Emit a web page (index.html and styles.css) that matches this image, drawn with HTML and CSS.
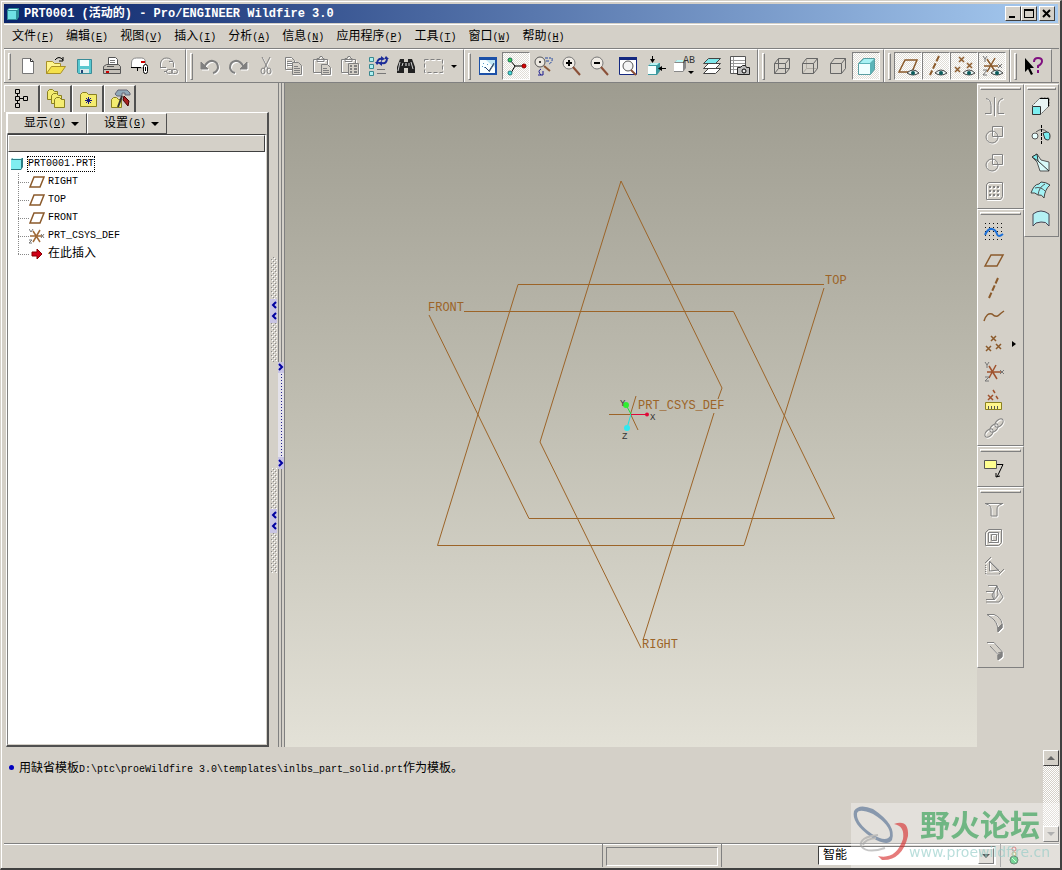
FILE: index.html
```
<!DOCTYPE html>
<html lang="zh-CN">
<head>
    <meta charset="utf-8">
    <title>PRT0001 (活动的) - Pro/ENGINEER Wildfire 3.0</title>
    <link rel="stylesheet" href="styles.css">
</head>
<body>
    <div class="window">
        <header class="titlebar">
            <svg class="app-icon" width="12" height="12" viewBox="0 0 12 12"><path d="M0 2l2-2h10v9l-2 3H0z" fill="#2f8f98"/><path d="M1 3h8v8H1z" fill="#6fe0e4"/><path d="M1 2l1-1h9l-1 1z" fill="#c8ffff"/></svg>
            <h1 class="title">PRT0001 (活动的) - Pro/ENGINEER Wildfire 3.0</h1>
            <button class="win-btn" aria-label="最小化"><svg width="12" height="11" viewBox="0 0 12 11"><path d="M2 8h6v2H2z"/></svg></button>
            <button class="win-btn" aria-label="最大化"><svg width="12" height="11" viewBox="0 0 12 11"><path d="M1 1h10v9H1zM2 3v6h8V3z" fill-rule="evenodd"/></svg></button>
            <button class="win-btn close" aria-label="关闭"><svg width="12" height="11" viewBox="0 0 12 11"><path d="M2 2l7 7M9 2l-7 7" stroke="#000" stroke-width="2"/></svg></button>
        </header>

        <nav class="menubar">
            <button>文件<span>(<u>F</u>)</span></button>
            <button>编辑<span>(<u>E</u>)</span></button>
            <button>视图<span>(<u>V</u>)</span></button>
            <button>插入<span>(<u>I</u>)</span></button>
            <button>分析<span>(<u>A</u>)</span></button>
            <button>信息<span>(<u>N</u>)</span></button>
            <button>应用程序<span>(<u>P</u>)</span></button>
            <button>工具<span>(<u>T</u>)</span></button>
            <button>窗口<span>(<u>W</u>)</span></button>
            <button>帮助<span>(<u>H</u>)</span></button>
        </nav>

        <div class="toolbars">
            <!-- file -->
            <div class="group">
                <button class="tool" aria-label="新建"><svg viewBox="0 0 22 22"><path d="M5.500 3.500h8l3 3v12h-11z" fill="#fff" stroke="#777"/><path d="M13.500 3.500v3h3" fill="none" stroke="#333"/></svg></button>
                <button class="tool" aria-label="打开"><svg viewBox="0 0 22 22"><path d="M1.500 18.500v-12h6l2 2h6v3" fill="#fff58c" stroke="#a89028"/><path d="M1.500 18.500l5-7h14l-5 7z" fill="#f5e14a" stroke="#a89028"/><path d="M10 5q4-5 8 0M18 2v4h-4" fill="none" stroke="#000"/></svg></button>
                <button class="tool" aria-label="保存"><svg viewBox="0 0 22 22"><path d="M4.500 4.500h14v14h-13l-1-1z" fill="#58c8d0" stroke="#3a8c98"/><path d="M7 5h9v6H7z" fill="#f4ffff"/><path d="M7 14h9v4H7z" fill="#d8e8e8"/><path d="M8 15h2v3H8z" fill="#247"/></svg></button>
                <button class="tool" aria-label="打印"><svg viewBox="0 0 22 22"><path d="M7.500 10V2.500h7l2 2V10" fill="#fff" stroke="#555"/><path d="M9 5.500h5M9 7.500h5" stroke="#777"/><path d="M2.500 11.500l3-2h12l2 2v7h-17z" fill="#c4c0b8" stroke="#555"/><path d="M3 14.500h16" stroke="#444"/><path d="M6 11.500h7" stroke="#555"/><path d="M5 17h3" stroke="#c00" stroke-width="2"/></svg></button>
                <button class="tool" aria-label="发送邮件"><svg viewBox="0 0 22 22"><path d="M2.500 12.500V8q0-5 5-5h5q4 0 4 5v5z" fill="#fff" stroke="#888"/><path d="M2 12.500h10M8.500 12v4" stroke="#000"/><path d="M12 7h4" stroke="#c00" stroke-width="2"/><rect x="14.500" y="9.500" width="4" height="9" rx="2" fill="#fff" stroke="#000"/><path d="M16.500 12v4" stroke="#000"/></svg></button>
                <button class="tool off" aria-label="发送链接"><svg viewBox="0 0 22 22"><path d="M3.500 12.500V8q1-5 6-5t7 5v4M3 12.500h6M12 6.500h4M7 16.500h3"/><rect x="9.500" y="14.500" width="6" height="4" rx="2"/><rect x="14.500" y="14.500" width="6" height="4" rx="2"/></svg></button>
            </div>

            <!-- edit -->
            <div class="group">
                <button class="tool off" aria-label="撤消"><svg viewBox="0 0 22 22"><path d="M5 12q4-7 9-6t5 7q-1 4-5 5" stroke-width="2"/><path d="M2 7v7h7z" fill="#808080"/></svg></button>
                <button class="tool off" aria-label="重做"><svg viewBox="0 0 22 22"><path d="M17 12q-4-7-9-6t-5 7q1 4 5 5" stroke-width="2"/><path d="M20 7v7h-7z" fill="#808080"/></svg></button>
                <button class="tool off" aria-label="剪切"><svg viewBox="0 0 22 22"><path d="M7 2l6 12M15 2L9 14"/><ellipse cx="8" cy="16" rx="2" ry="3"/><ellipse cx="14" cy="16" rx="2" ry="3"/></svg></button>
                <button class="tool off" aria-label="复制"><svg viewBox="0 0 22 22"><path d="M2.500 2.500h6l3 3v9h-9zM4 6.500h5M4 8.500h6M4 10.500h6"/><path d="M9.500 7.500h6l3 3v9h-9z" fill="#d4d0c8"/><path d="M11 11.500h4M11 13.500h6M11 15.500h6M11 17.500h6"/></svg></button>
                <button class="tool off" aria-label="粘贴"><svg viewBox="0 0 22 22"><path d="M2.500 4.500h14v13h-14zM6 6.500V3.500h2l1-2h2l1 2h1v3z"/><path d="M10.500 9.500h6l3 3v7h-9z" fill="#d4d0c8"/><path d="M12 13.500h4M12 15.500h6M12 17.500h6"/></svg></button>
                <button class="tool off" aria-label="选择性粘贴"><svg viewBox="0 0 22 22"><path d="M2.500 4.500h14v13h-14zM6 6.500V3.500h2l1-2h2l1 2h1v3z"/><path d="M9.500 8.500h10v11h-10z" fill="#d4d0c8"/><path d="M11 11h2M15 11h3M11 14h2M15 14h3M11 17h2M15 17h3" stroke-width="2"/></svg></button>
                <button class="tool" aria-label="再生"><svg viewBox="0 0 22 22"><g fill="#aef0f0" stroke="#3a8890"><path d="M2.500 2.500h4v4h-4zM2.500 9.500h4v4h-4zM2.500 16.500h4v4h-4z"/></g><path d="M10 8q1-5 5-4M20 3q0 6-5 5" fill="none" stroke="#1c2c98" stroke-width="2"/><path d="M14 1l4 3-4 2zM15 6v5l-4-3zM8 7h5l-3 3zM17 4h5l-3-3z" fill="#1c2c98"/><path d="M10 14.500h8M10 18.500h9" stroke="#777"/></svg></button>
                <button class="tool" aria-label="查找"><svg viewBox="0 0 22 22"><path d="M5 4h4v3h4V4h4l3 8v6h-7v-5H9v5H2v-6z" fill="#222"/><path d="M5 7l-2 9M8 8l-1 3M16 7l2 7M14 8v3" stroke="#ccc"/><path d="M10 8h2v3h-2z" fill="#888"/></svg></button>
                <button class="tool off" aria-label="选取框"><svg viewBox="0 0 22 22"><path d="M1.500 4.500h18v13h-18z" stroke-dasharray="4 2"/></svg></button>
                <button class="drop" aria-label="更多选取"><svg width="6" height="3" viewBox="0 0 6 3"><path d="M0 0h6L3 3z"/></svg></button>
            </div>

            <!-- view -->
            <div class="group">
                <button class="tool" aria-label="重画"><svg viewBox="0 0 22 22"><path d="M2 2h18v18H2z" fill="#1b50a8"/><path d="M3 5h15v13H3z" fill="#bfe6f4"/><path d="M3 5h6l9 8v5H3z" fill="#f8ffff"/><path d="M8 12l4 4 5-8" fill="none" stroke="#22406c" stroke-width="1"/><path d="M12 17l5-8" stroke="#456"/><path d="M6 8l1 1M10 9l1 1M7 12l1 1M5 11l1 1" stroke="#5a9cc8"/></svg></button>
                <button class="tool on" aria-label="旋转中心"><svg viewBox="0 0 22 22"><path d="M5 5l5 6h8M10 11l-4 7" fill="none" stroke="#000" stroke-width="1"/><circle cx="5" cy="5" r="2" fill="#39d54a" stroke="#165"/><circle cx="19" cy="11" r="2" fill="#d00" stroke="#800"/><circle cx="5" cy="18" r="2" fill="#4dd" stroke="#277"/></svg></button>
                <button class="tool" aria-label="定向模式"><svg viewBox="0 0 22 22"><circle cx="7" cy="7" r="5" fill="#ece8e0" stroke="#555"/><circle cx="7" cy="7" r="1" fill="#000"/><path d="M11 11l6 5" stroke="#8b5a3a" stroke-width="2"/><path d="M12 3h6M19 3q1 4-3 6M13 6h4" fill="none" stroke="#2448a0" stroke-dasharray="3 1"/><path d="M8 14q-4 2 0 6M5 20h5v-4" fill="none" stroke="#1a1a90"/></svg></button>
                <button class="tool" aria-label="放大"><svg viewBox="0 0 22 22"><circle cx="8" cy="8" r="6" fill="#f0ece6" stroke="#777"/><path d="M5 8h6M8 5v6" stroke="#000" stroke-width="2"/><path d="M12 12l7 8" stroke="#8b5038" stroke-width="2"/></svg></button>
                <button class="tool" aria-label="缩小"><svg viewBox="0 0 22 22"><circle cx="8" cy="8" r="6" fill="#f0ece6" stroke="#777"/><path d="M5 8h6" stroke="#000" stroke-width="2"/><path d="M12 12l7 8" stroke="#8b5038" stroke-width="2"/></svg></button>
                <button class="tool" aria-label="重新调整"><svg viewBox="0 0 22 22"><path d="M2.500 2.500h17v17h-17z" fill="#fff" stroke="#142880"/><path d="M2 2h18v3H2z" fill="#142880"/><circle cx="11" cy="11" r="5" fill="#f4f4f4" stroke="#555"/><path d="M14 15l5 5" stroke="#8b5038" stroke-width="2"/></svg></button>
                <button class="tool" aria-label="重定向"><svg viewBox="0 0 22 22"><path d="M3 11l3-3h9v8l-3 4H3z" fill="#3c9aa0"/><path d="M3 11h8v8H3z" fill="#f4ffff"/><path d="M4 10l2-2h8l-2 2z" fill="#b8f4f4"/><path d="M7.500 1v5M21 13.500h-5" stroke="#000"/><path d="M5 4h5L7.500 8zM17 11v5l-4-2.500z"/></svg></button>
                <button class="tool" aria-label="已命名视图"><svg viewBox="0 0 22 22"><path d="M1 8l3-3h9v8l-3 4H1z" fill="#888"/><path d="M1 8h9v8H1z" fill="#fff"/><path d="M2 7l2-2h8l-2 2z" fill="#b8f4f4"/><path d="M15 16h6l-3 3z"/><text class="icon-text" x="10" y="8">AB</text></svg></button>
                <button class="tool" aria-label="层"><svg viewBox="0 0 22 22"><g stroke="#444" fill="#fff"><path d="M2.500 18.500l5-5h12l-5 5z"/><path d="M2.500 13.500l5-5h12l-5 5z"/><path d="M2.500 8.500l5-5h12l-5 5z" fill="#7ee8ec"/></g></svg></button>
                <button class="tool" aria-label="视图管理器"><svg viewBox="0 0 22 22"><path d="M1.500 1.500h15v17h-15z" fill="#fff" stroke="#555"/><path d="M4.500 2v16M2 5.500h14M2 8.500h14M2 11.500h14M2 14.500h14" stroke="#999"/><path d="M8.500 12.500h3l2-2h3l1 2h3v7h-12z" fill="#bbb" stroke="#222"/><circle cx="15" cy="16" r="2" fill="#eee" stroke="#000"/></svg></button>
            </div>

            <!-- display style -->
            <div class="group">
                <button class="tool wire" aria-label="线框"><svg viewBox="0 0 22 22"><path d="M3.500 8.500h11v10h-11zM3.500 8.500l4-5h11v10l-4 5M14.500 8.500l4-5M7.500 3.500v10h11M7.500 13.500l-4 5"/></svg></button>
                <button class="tool wire" aria-label="隐藏线"><svg viewBox="0 0 22 22"><path d="M7.500 3.500v10h11M7.500 13.500l-4 5" class="pale"/><path d="M3.500 8.500h11v10h-11zM3.500 8.500l4-5h11v10l-4 5M14.500 8.500l4-5"/></svg></button>
                <button class="tool wire" aria-label="无隐藏线"><svg viewBox="0 0 22 22"><path d="M3.500 8.500h11v10h-11zM3.500 8.500l4-5h11v10l-4 5M14.500 8.500l4-5"/></svg></button>
                <button class="tool on" aria-label="着色"><svg viewBox="0 0 22 22"><path d="M3.500 8.500l5-5h11v11l-4 5h-12z" fill="#5cb4b8" stroke="#5a9ea2"/><path d="M4 9h11v10H4z" fill="#f0ffff"/><path d="M5 8l4-4h10l-4 4z" fill="#a8f2f4"/></svg></button>
            </div>

            <!-- datum display -->
            <div class="group">
                <button class="tool on" aria-label="基准平面开/关"><svg viewBox="0 0 22 22"><path d="M2 17L8 5h12l-5 12z" fill="none" stroke="#8b5a2b" stroke-width="1.500"/><path d="M10 18q6-6 12 0-6 4-12 0z" fill="#e8f4f4" stroke="#444"/><circle cx="16" cy="18" r="2" fill="#0a5a5a"/></svg></button>
                <button class="tool on" aria-label="基准轴开/关"><svg viewBox="0 0 22 22"><path d="M14 1L5 20" stroke="#8b5a2b" stroke-width="2" stroke-dasharray="6 2"/><path d="M10 18q6-6 12 0-6 4-12 0z" fill="#e8f4f4" stroke="#444"/><circle cx="16" cy="18" r="2" fill="#0a5a5a"/></svg></button>
                <button class="tool on" aria-label="基准点开/关"><svg viewBox="0 0 22 22"><path d="M6 2l5 5M11 2L6 7M2 12l5 5M7 12l-5 5M14 8l5 5M19 8l-5 5" stroke="#8b5a2b" stroke-width="1.500"/><path d="M10 18q6-6 12 0-6 4-12 0z" fill="#e8f4f4" stroke="#444"/><circle cx="16" cy="18" r="2" fill="#0a5a5a"/></svg></button>
                <button class="tool on" aria-label="坐标系开/关"><svg viewBox="0 0 22 22"><path d="M3 11h14M6 4l9 14M14 3L6 17" stroke="#8b5a2b" stroke-width="1.500"/><path d="M2 1l2 3 2-3M4 4v3M17 9l4 4M21 9l-4 4M2 15h4l-4 5h4" fill="none" stroke="#777"/><path d="M10 18q6-6 12 0-6 4-12 0z" fill="#e8f4f4" stroke="#444"/><circle cx="16" cy="18" r="2" fill="#0a5a5a"/></svg></button>
            </div>

            <div class="group">
                <button class="tool" aria-label="上下文相关帮助"><svg viewBox="0 0 22 22"><path d="M2 3v14l3-3 3 6 2-1-3-6h4z"/><path d="M11 7q0-4 4-4t4 3q0 3-4 5v2M15 15v3" fill="none" stroke="#801080" stroke-width="2"/></svg></button>
            </div>
        </div>

        <main class="workspace">
            <aside class="navigator">
                <div class="tabs">
                    <button class="tab current" aria-label="模型树"><svg viewBox="0 0 22 22"><path d="M4.500 1.500h4v4h-4zM4.500 8.500h4v4h-4zM4.500 15.500h4v4h-4zM12.500 8.500h4v4h-4zM6.500 5.500v3M6.500 12.500v3M8.500 10.500h4" fill="none" stroke="#000"/></svg></button>
                    <button class="tab" aria-label="文件夹浏览器"><svg viewBox="0 0 22 22"><g fill="#f4ec70" stroke="#8a8020"><path d="M2.500 11.500v-8l2-2h3l2 2h3v8z"/><path d="M6.500 15.500v-8l2-2h3l2 2h3v8z"/><path d="M9.500 19.500v-8l2-2h3l2 2h3v8z"/></g></svg></button>
                    <button class="tab" aria-label="收藏夹"><svg viewBox="0 0 22 22"><path d="M3.500 18.500v-12l2-2h4l2 2h8v12z" fill="#f4ec70" stroke="#8a8020"/><path d="M11.500 9v7M8 12.500h7M9 10l5 5M14 10l-5 5" stroke="#1a1a80"/></svg></button>
                    <button class="tab" aria-label="连接"><svg viewBox="0 0 22 22"><path d="M2.500 19.500v-8l2-2h3l2 2h3v8z" fill="#f4ec70" stroke="#8a8020"/><path d="M6 6l3-4h9l3 3v2h-5V5h-3v3H8z" fill="#8fa8b8" stroke="#667"/><path d="M13 8L9 19" stroke="#333" stroke-width="2"/><path d="M15 8l5 5-1 5-5-6z" fill="#a82020" stroke="#400"/></svg></button>
                </div>
                <div class="tree-page">
                    <div class="tree-actions">
                        <button>显示<span>(<u>O</u>)</span><i class="caret"></i></button>
                        <button>设置<span>(<u>G</u>)</span><i class="caret"></i></button>
                    </div>
                    <div class="tree-box">
                        <div class="tree-head"></div>
                        <div class="tree-root">
                            <svg width="14" height="14" viewBox="0 0 14 14"><path d="M1 3l1-2h11v9l-2 3H1z" fill="#2c7c84"/><path d="M1 3h10v9H1z" fill="#80eef0"/><path d="M2 2l1-1h9l-1 1z" fill="#d8ffff"/></svg>
                            <span class="focused">PRT0001.PRT</span>
                        </div>
                        <ul class="tree">
                            <li><svg viewBox="0 0 16 16"><path d="M1 13L5 3h10l-4 10z" fill="none" stroke="#8b5a2b" stroke-width="1.500"/></svg>RIGHT</li>
                            <li><svg viewBox="0 0 16 16"><path d="M1 13L5 3h10l-4 10z" fill="none" stroke="#8b5a2b" stroke-width="1.500"/></svg>TOP</li>
                            <li><svg viewBox="0 0 16 16"><path d="M1 13L5 3h10l-4 10z" fill="none" stroke="#8b5a2b" stroke-width="1.500"/></svg>FRONT</li>
                            <li><svg viewBox="0 0 16 16"><path d="M1 8h12M4 3l7 11M11 2L4 14" stroke="#a06a38" stroke-width="1.500"/><path d="M0 1l2 3 2-3M12 6l3 4M15 6l-3 4M0 12h3l-3 3h3" fill="none" stroke="#777"/></svg>PRT_CSYS_DEF</li>
                            <li class="cjk"><svg viewBox="0 0 16 16"><path d="M3 6h5V3l5 5-5 5v-3H3z" fill="#d00018" stroke="#800"/></svg>在此插入</li>
                        </ul>
                    </div>
                </div>
            </aside>

            <div class="splitter">
                <svg width="16" height="316" viewBox="0 0 16 316">
                    <defs><pattern id="dots" width="4" height="4" patternUnits="userSpaceOnUse"><path d="M0 0h1v1H0zM2 2h1v1H2z" fill="#888"/><path d="M1 1h1v1H1zM3 3h1v1H3z" fill="#fff"/></pattern></defs>
                    <path d="M2 0h6v105H2zM2 211h6v105H2z" fill="url(#dots)"/>
                    <path d="M1 42h7v24H1zM1 252h7v24H1zM9 105h6v107H9z" fill="#c8c4e4"/>
                    <path d="M9 116h6v84H9z" fill="#e4e2ea"/>
                    <path d="M12.500 117v82" stroke="#22228c" stroke-dasharray="1 2"/>
                    <g fill="none" stroke="#0000a0" stroke-width="2"><path d="M7 45l-3 3 3 3M7 56l-3 3 3 3M7 255l-3 3 3 3M7 266l-3 3 3 3M10 107l3 3-3 3M10 203l3 3-3 3"/></g>
                </svg>
            </div>

            <section class="viewport">
                <svg viewBox="285 83 692 664" role="img" aria-label="模型">
                    <!-- default datum planes -->
                    <g class="plane">
                        <path d="M464 311.500H733.500L834.500 518.500H529L429 315"/>
                        <path d="M824 288L744 545.500H437.500L518 284.500H824"/>
                        <path d="M718 399L722 388L621 181L540 442L641 648M714 413L643 640"/>
                        <path d="M609 414.500H630M636 396L630.500 414L638 430"/>
                    </g>
                    <path d="M631 414L626 405" stroke="#20e040"/>
                    <path d="M631 414L627 428" stroke="#20e0e0"/>
                    <path d="M631 414.500H647" stroke="#e00838"/>
                    <circle cx="626" cy="405" r="3" fill="#30ee30"/>
                    <circle cx="627" cy="428" r="3" fill="#30e8f0"/>
                    <circle cx="647" cy="414.500" r="2" fill="#e00838"/>
                    <g class="axis"><text x="620" y="406">Y</text><text x="650" y="420">X</text><text x="622" y="439">Z</text></g>
                    <g class="datum">
                        <text x="428" y="311">FRONT</text>
                        <text x="825" y="284">TOP</text>
                        <text x="642" y="648">RIGHT</text>
                        <text x="638" y="409">PRT_CSYS_DEF</text>
                    </g>
                </svg>
            </section>

            <div class="side">
                <div class="vgroup">
                    <button class="tool off" aria-label="修剪"><svg viewBox="0 0 22 22"><path d="M11.500 1v19M3 2.500q5 1 5 7v8H2M20 2.500q-5 1-5 7v8h6"/></svg></button>
                    <button class="tool off" aria-label="合并"><svg viewBox="0 0 22 22"><path d="M9.500 2.500h10v10h-10z"/><circle cx="9" cy="13" r="6"/></svg></button>
                    <button class="tool off" aria-label="相交"><svg viewBox="0 0 22 22"><path d="M9.500 2.500h10v10h-10z"/><circle cx="9" cy="13" r="6"/></svg></button>
                    <button class="tool off" aria-label="阵列"><svg viewBox="0 0 22 22"><path d="M3.500 4.500l2-2h14v14l-2 3h-14z"/><path d="M6 7h11M6 11h11M6 15h11" stroke-width="2" stroke-dasharray="2 2"/></svg></button>
                </div>
                <div class="vgroup">
                    <button class="tool" aria-label="草绘"><svg viewBox="0 0 22 22"><path d="M2 2.500h19M2 6.500h19M2 14.500h19M2 18.500h19M2 10.500h19" stroke="#111" stroke-dasharray="1 3"/><path d="M2 14q3-7 7-6t5 5 6 0" fill="none" stroke="#1c70d8" stroke-width="2"/></svg></button>
                    <button class="tool" aria-label="平面"><svg viewBox="0 0 22 22"><path d="M2 17L8 6h12l-6 11z" fill="none" stroke="#8b5a2b" stroke-width="1.500"/></svg></button>
                    <button class="tool" aria-label="轴"><svg viewBox="0 0 22 22"><path d="M15 1L6 21" stroke="#8b5a2b" stroke-width="2" stroke-dasharray="6 2"/></svg></button>
                    <button class="tool" aria-label="曲线"><svg viewBox="0 0 22 22"><path d="M1 16q3-9 8-7 4 4 7 1 2-2 5-4" fill="none" stroke="#8b5a2b" stroke-width="1.500"/></svg></button>
                    <div class="tool-row">
                        <button class="tool" aria-label="点"><svg viewBox="0 0 22 22"><path d="M8 3l5 5M13 3L8 8M3 13l5 5M8 13l-5 5M13 11l5 5M18 11l-5 5" stroke="#8b5a2b" stroke-width="1.500"/></svg></button>
                        <button class="flyout" aria-label="更多点"><svg width="4" height="6" viewBox="0 0 4 6"><path d="M0 0l4 3-4 3z"/></svg></button>
                    </div>
                    <button class="tool" aria-label="坐标系"><svg viewBox="0 0 22 22"><path d="M4 11h14M6 5l8 13M13 4L6 17" stroke="#a0522d" stroke-width="1.500"/><path d="M2 1l2 3 2-3M4 4v3M17 9l4 4M21 9l-4 4M2 16h4l-4 4h4" fill="none" stroke="#777"/></svg></button>
                    <button class="tool" aria-label="分析"><svg viewBox="0 0 22 22"><path d="M5 6l5 5M10 6l-5 5M10 1l2 3M13 7l2 3" stroke="#a0522d" stroke-width="1.500"/><path d="M2.500 13.500h16v7h-16z" fill="#fff58c" stroke="#8a8020"/><path d="M5.500 17v3M8.500 17v3M11.500 17v3M14.500 17v3" stroke="#555"/></svg></button>
                    <button class="tool off" aria-label="参照"><svg viewBox="0 0 22 22"><ellipse cx="16" cy="6" rx="5" ry="3" transform="rotate(-45 16 6)"/><ellipse cx="11" cy="11" rx="5" ry="3" transform="rotate(-45 11 11)"/><ellipse cx="6" cy="16" rx="5" ry="3" transform="rotate(-45 6 16)"/></svg></button>
                </div>
                <div class="vgroup">
                    <button class="tool" aria-label="注释"><svg viewBox="0 0 22 22"><path d="M1.500 2.500h12v8h-12z" fill="#ffff90" stroke="#555"/><path d="M14 6.500h6L14 19M13 15v4l4-1" fill="none" stroke="#000"/></svg></button>
                </div>
                <div class="vgroup">
                    <button class="tool off" aria-label="孔"><svg viewBox="0 0 22 22"><path d="M2 4.500h18M3 5q5 1 5 5v7h6v-7q0-4 5-5"/></svg></button>
                    <button class="tool off" aria-label="壳"><svg viewBox="0 0 22 22"><path d="M2.500 5.500l3-3h13v13l-3 3h-13zM5.500 5.500h10v10h-10zM8.500 7.500h5v6h-5z"/></svg></button>
                    <button class="tool off" aria-label="筋"><svg viewBox="0 0 22 22"><path d="M8 2L2 8M6.500 6v10l9-1zM6 6l12 12M21 14l-5 5"/><path d="M2.500 10v9h15" stroke-dasharray="1 1"/></svg></button>
                    <button class="tool off" aria-label="拔模"><svg viewBox="0 0 22 22"><path d="M3 8.500h8v8H3M5 2.500h9l-3 6M14 3l6 11-4 5H3M11 17l-2-5 5-9 1 9z"/></svg></button>
                    <button class="tool off" aria-label="倒圆角"><svg viewBox="0 0 22 22"><path d="M4 3.500h7q7 3 8 9v4l-4 4M4 3.500l4 3q7 4 7 14"/><path d="M15 17l4-4v4l-4 4z" fill="#808080"/></svg></button>
                    <button class="tool off" aria-label="倒角"><svg viewBox="0 0 22 22"><path d="M4 3.500h7l8 9v5l-4 3v-5L7 7M15 14l4-1"/><path d="M15 16l4-3v5l-4 3z" fill="#808080"/></svg></button>
                </div>
            </div>

            <div class="side narrow">
                <div class="vgroup">
                    <button class="tool" aria-label="拉伸"><svg viewBox="0 0 22 22"><path d="M2 10l8-8h9v8l-8 8" fill="#e8f4f4" stroke="#555" stroke-dasharray="2 1"/><path d="M10 2.500h8.500v8" fill="none" stroke="#000"/><path d="M2.500 10.500h8v8h-8z" fill="#7ceef0" stroke="#333"/></svg></button>
                    <button class="tool" aria-label="旋转"><svg viewBox="0 0 22 22"><path d="M6 8q6-5 11 0" fill="none" stroke="#555"/><circle cx="5" cy="12" r="3" fill="#e8ffff" stroke="#555"/><path d="M13 9q7-3 7 3t-5 3z" fill="#7ceef0" stroke="#333"/><path d="M11.500 1v20" stroke="#000" stroke-dasharray="3 1"/></svg></button>
                    <button class="tool" aria-label="可变剖面扫描"><svg viewBox="0 0 22 22"><path d="M2 5l5-3 4 6 8 2v9h-9l-3-9z" fill="#d8fafa" stroke="#555"/><path d="M2 5l5-3 1 7z" fill="#7ceef0" stroke="#333"/><path d="M8 9l11 10" stroke="#333"/></svg></button>
                    <button class="tool" aria-label="边界混合"><svg viewBox="0 0 22 22"><path d="M1 13q3-9 8-9l2-2q5 0 9 3-5 4-6 13-2-4-6-3-3-3-7-2z" fill="#a4f2f4" stroke="#444"/><path d="M5 8q6-2 11 4M8 15q1-8 7-11" fill="none" stroke="#555"/></svg></button>
                    <button class="tool" aria-label="造型"><svg viewBox="0 0 22 22"><path d="M3 6q8-6 16 0v12q-3-5-8-4-6 0-8 4z" fill="#b4f0f4" stroke="#445"/></svg></button>
                </div>
            </div>
        </main>

        <section class="messages">
            <p>用缺省模板<span>D:\ptc\proeWildfire 3.0\templates\inlbs_part_solid.prt</span>作为模板。</p>
            <div class="scrollbar">
                <button aria-label="向上"><svg width="8" height="4" viewBox="0 0 8 4"><path d="M0 4h8L4 0z" fill="#666"/></svg></button>
                <button aria-label="向下"><svg width="8" height="4" viewBox="0 0 8 4"><path d="M0 0h8L4 4z" fill="#888"/></svg></button>
            </div>
        </section>

        <footer class="statusbar">
            <div class="status-text"></div>
            <div class="progress"></div>
            <div class="filter">
                <label for="filter" class="hidden">选取过滤器</label>
                <div class="combo">
                    <select id="filter"><option>智能</option></select>
                    <span class="combo-btn"><svg width="8" height="4" viewBox="0 0 8 4"><path d="M0 0h8L4 4z"/></svg></span>
                </div>
            </div>
            <div class="lights">
                <svg width="12" height="20" viewBox="0 0 12 20"><circle cx="6" cy="3" r="2" fill="#f4d8d8" stroke="#c04040"/><circle cx="6" cy="8" r="2" fill="#f4f0d0" stroke="#a09040"/><circle cx="6" cy="14" r="4" fill="#30c060" stroke="#205030"/><path d="M4 12l4 4" stroke="#b8ffc8"/></svg>
            </div>
        </footer>

        <div class="watermark">
            <svg width="58" height="60" viewBox="0 0 58 60">
                <path d="M3 8Q8 0 22 6Q46 22 41 37Q36 44 20 34Q0 20 3 8zM6 10Q5 20 21 31Q35 40 39 33Q40 22 22 11Q8 5 6 10z" fill="#6f86a4" fill-rule="evenodd"/>
                <path d="M43 21Q58 16 57 33Q51 58 31 57L27 53Q45 57 52 36Q54 23 43 21z" fill="#de5050"/>
                <path d="M27 32Q8 34 10 43Q16 51 34 45M12 42Q14 36 25 35" fill="none" stroke="#b4b4b4" stroke-width="2"/>
            </svg>
            <div class="watermark-text"><strong>野火论坛</strong><span>www.proewildfire.cn</span></div>
        </div>
    </div>
</body>
</html>
```
FILE: styles.css
```
*,
*::before {
    box-sizing: border-box;
}

body {
    margin: 0;
    background: #d4d0c8;
    color: #000;
    font-family: "Liberation Mono", "Noto Sans CJK SC", monospace;
    font-size: 12px;
    line-height: 16px;
}

button {
    margin: 0;
    padding: 0;
    border: none;
    background: none;
    color: inherit;
    font: inherit;
}

svg {
    display: block;
    flex: none;
}

.window {
    position: relative;
    display: flex;
    flex-direction: column;
    height: 100vh;
    min-height: 800px;
    padding: 2px 1px 1px 3px;
    border-top: 1px solid #d4d0c8;
    border-left: 1px solid #d4d0c8;
    border-right: 2px solid #404040;
    border-bottom: 2px solid #404040;
    box-shadow: inset 1px 1px 0 #fff;
    overflow: hidden;
}

/* title bar */
.titlebar {
    display: flex;
    align-items: center;
    height: 19px;
    margin: 1px 1px 0 0;
    padding: 0 3px;
    background: linear-gradient(to right, #0a246a, #a6caf0);
    color: #fff;
}

.title {
    flex: 1;
    margin: 0 0 0 5px;
    font-size: 12px;
    line-height: 18px;
    font-weight: bold;
    white-space: nowrap;
}

.win-btn {
    display: flex;
    align-items: center;
    justify-content: center;
    width: 16px;
    height: 15px;
    background: #d4d0c8;
    border: 1px solid;
    border-color: #fff #404040 #404040 #fff;
}

.win-btn.close {
    margin-left: 2px;
}

/* menu bar */
.menubar {
    display: flex;
    gap: 12px;
    height: 25px;
    margin-top: 1px;
    padding: 2px 8px 0;
    border-top: 1px solid #fff;
    border-bottom: 1px solid #808080;
}

.menubar button,
.tree-actions button {
    white-space: nowrap;
}

.menubar span,
.tree-actions span,
.messages span {
    font-size: 10px;
}

/* toolbars */
.toolbars {
    display: flex;
    height: 34px;
    border-bottom: 1px solid #808080;
}

.group {
    display: flex;
    align-items: center;
    padding: 0 3px;
    border-left: 1px solid #fff;
    border-top: 1px solid #fff;
    border-right: 1px solid #808080;
}

.group::before {
    content: "";
    width: 3px;
    height: 27px;
    margin-right: 3px;
    border: 1px solid;
    border-color: #fff #808080 #808080 #fff;
}

.tool {
    display: flex;
    align-items: center;
    justify-content: center;
    flex: none;
    width: 28px;
    height: 28px;
}

.tool svg,
.tab svg {
    width: 22px;
    height: 22px;
}

.tool.on {
    border: 1px solid;
    border-color: #808080 #fff #fff #808080;
    background: repeating-conic-gradient(#fff 0 25%, #e0ddd6 0 50%) 0 0 / 2px 2px;
}

.tool.off svg {
    fill: none;
    stroke: #808080;
    filter: drop-shadow(1px 1px 0 #fff);
}

.tool.wire svg {
    fill: none;
    stroke: #666;
}

.tool.wire .pale {
    stroke: #b0aca4;
}

.icon-text {
    font-size: 10px;
    fill: #333;
}

.drop {
    display: flex;
    justify-content: center;
    width: 12px;
}

/* navigator */
.workspace {
    flex: 1;
    display: flex;
    min-height: 0;
}

.navigator {
    flex: none;
    display: flex;
    flex-direction: column;
    width: 265px;
    padding-top: 2px;
}

.tabs {
    display: flex;
}

.tab {
    display: flex;
    align-items: center;
    justify-content: center;
    width: 32px;
    height: 27px;
    border-top: 1px solid #fff;
    border-left: 1px solid #fff;
    border-right: 2px solid #505050;
}

.tab.current {
    width: 36px;
}

.tree-page {
    flex: 1;
    display: flex;
    flex-direction: column;
    margin-left: 2px;
    border-top: 1px solid #fff;
    border-left: 1px solid #fff;
    border-right: 2px solid #505050;
    border-bottom: 2px solid #505050;
}

.tree-actions {
    display: flex;
}

.tree-actions button {
    display: flex;
    align-items: center;
    justify-content: flex-end;
    width: 80px;
    height: 21px;
    padding: 1px 7px 0 0;
    border: 1px solid;
    border-color: #fff #505050 #505050 #fff;
}

.caret {
    margin-left: 5px;
    border: 4px solid transparent;
    border-top-color: #000;
    border-bottom: none;
}

.tree-box {
    flex: 1;
    background: #fff;
    border: 1px solid #808080;
    border-bottom-color: #d4d0c8;
    border-right-color: #d4d0c8;
}

.tree-head {
    height: 17px;
    margin-right: 1px;
    background: #d4d0c8;
    border: 1px solid;
    border-color: #fff #404040 #404040 #fff;
    box-shadow: 0 -1px 0 #404040;
}

.tree-root {
    display: flex;
    align-items: center;
    gap: 4px;
    height: 18px;
    margin-top: 3px;
    padding-left: 2px;
    font-size: 10px;
}

.focused {
    height: 14px;
    line-height: 14px;
    outline: 1px dotted #000;
}

.tree {
    margin: 0 0 0 10px;
    padding: 0;
    list-style: none;
    font-size: 10px;
}

.tree li {
    display: flex;
    align-items: center;
    height: 18px;
    background: repeating-linear-gradient(to bottom, #888 0 1px, transparent 1px 2px) 0 0 / 1px 18px no-repeat;
}

.tree li:last-child {
    background-size: 1px 9px;
}

.tree li::before {
    content: "";
    width: 11px;
    border-top: 1px dotted #888;
}

.tree li svg {
    width: 16px;
    height: 16px;
    margin-right: 3px;
}

.tree .cjk {
    font-size: 12px;
}

.splitter {
    flex: none;
    display: flex;
    align-items: center;
    width: 16px;
    background: linear-gradient(to right, transparent 9px, #808080 9px 10px, transparent 10px 12px, #808080 12px 13px, transparent 13px 15px, #808080 15px);
}

/* model window */
.viewport {
    flex: 1;
    min-width: 0;
    background: linear-gradient(#9e9c90, #c0beb2 50%, #e3e1d7);
}

.viewport svg {
    width: 100%;
    height: 100%;
}

.plane {
    fill: none;
    stroke: #9c6428;
    stroke-width: 1;
}

.datum {
    font-size: 12px;
    fill: #9c6428;
}

.axis {
    font-size: 9px;
    fill: #333;
}

/* feature toolbars */
.side {
    flex: none;
    width: 47px;
    padding-top: 1px;
}

.side.narrow {
    width: 35px;
}

.vgroup {
    padding: 2px 2px 3px;
    border-top: 1px solid #fff;
    border-left: 1px solid #fff;
    border-right: 1px solid #808080;
    border-bottom: 1px solid #808080;
}

.vgroup::before {
    content: "";
    display: block;
    height: 3px;
    margin-bottom: 3px;
    border: 1px solid;
    border-color: #fff #808080 #808080 #fff;
}

.tool-row {
    display: flex;
    align-items: center;
}

.flyout {
    margin-left: 4px;
}

/* messages */
.messages {
    flex: none;
    display: flex;
    justify-content: space-between;
    height: 96px;
    padding: 3px 0 1px;
}

.messages p {
    margin: 11px 0 0 5px;
    white-space: nowrap;
}

.messages p::before {
    content: "";
    display: inline-block;
    width: 5px;
    height: 5px;
    margin-right: 5px;
    border-radius: 50%;
    background: #0000c0;
    vertical-align: 2px;
}

.scrollbar {
    display: flex;
    flex-direction: column;
    justify-content: space-between;
    width: 16px;
    background: repeating-conic-gradient(#fff 0 25%, #d4d0c8 0 50%) 0 0 / 2px 2px;
}

.scrollbar button,
.combo-btn {
    display: flex;
    align-items: center;
    justify-content: center;
    width: 16px;
    height: 16px;
    background: #d4d0c8;
    border: 1px solid;
    border-color: #fff #404040 #404040 #fff;
}

/* status bar */
.statusbar {
    flex: none;
    display: flex;
    height: 24px;
    border-top: 1px solid #808080;
    box-shadow: inset 0 1px 0 #fff;
}

.status-text {
    flex: 1;
    border-right: 1px solid #808080;
}

.progress {
    width: 112px;
    margin: 3px 3px 1px;
    border: 1px solid;
    border-color: #808080 #fff #fff #808080;
}

.filter {
    display: flex;
    justify-content: flex-end;
    width: 280px;
    padding: 2px 4px 2px 0;
    border-left: 1px solid #808080;
    border-right: 1px solid #808080;
}

.combo {
    display: flex;
    align-items: center;
    width: 178px;
    padding-right: 1px;
    background: #fff;
    border: 1px solid;
    border-color: #404040 #fff #fff #404040;
}

.combo select {
    flex: 1;
    height: 17px;
    padding: 0 4px;
    border: none;
    background: #fff;
    color: #000;
    font: inherit;
    appearance: none;
}

.hidden {
    display: none;
}

.lights {
    display: flex;
    align-items: center;
    width: 58px;
    padding-left: 7px;
}

/* forum mark laid over the corner of the window */
.watermark {
    position: absolute;
    right: 0;
    bottom: 0;
    display: flex;
    width: 209px;
    height: 65px;
    background: rgba(255, 255, 255, 0.45);
    opacity: 0.75;
    pointer-events: none;
}

.watermark-text {
    display: flex;
    flex-direction: column;
    align-items: flex-end;
    white-space: nowrap;
}

.watermark strong {
    margin-right: 10px;
    color: #4fae6c;
    font-family: "Noto Sans CJK SC", sans-serif;
    font-size: 30px;
    line-height: 40px;
}

.watermark span {
    color: #a4d4d0;
    font-family: "DejaVu Sans", sans-serif;
    font-size: 14px;
    line-height: 18px;
}
```
